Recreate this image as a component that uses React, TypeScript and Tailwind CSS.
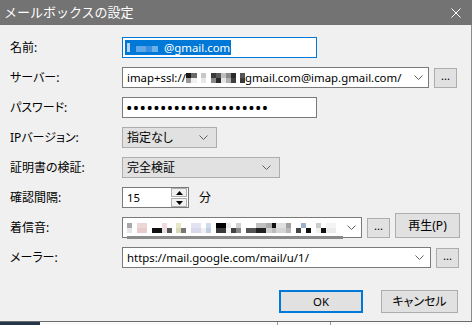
import React from 'react';

const jp = "font-['Noto_Sans','Noto_Sans_CJK_JP',sans-serif] [font-feature-settings:'palt']";
const latin = "font-['Noto_Sans',sans-serif] text-[11.4px]";

type Cell = [number, string, string];

// mosaic blocks (censored parts of the addresses)
const serverBlur: Cell[] = [
    [5, '#1a1a1a', '#9a9a9a'],
    [6, '#6a6a6a', '#f0f0f0'],
    [4, '#ffffff', '#ffffff'],
    [5, '#c8c8c8', '#e8e8e8'],
    [5, '#ffffff', '#ffffff'],
    [5, '#3a3a3a', '#8a8a8a'],
    [5, '#5a5a5a', '#2a2a2a'],
    [5, '#c0c0c0', '#e4e4e4'],
    [5, '#8a8a8a', '#b0b0b0'],
    [5, '#2a2a2a', '#404040'],
    [4, '#ffffff', '#ffffff'],
    [5, '#555555', '#3a3a3a'],
];

const ringBlur: Cell[] = [
    [5, '#a8a8a8', '#e6e6e6'],
    [5, '#ffffff', '#ffffff'],
    [10, '#ecd6d6', '#e8cccc'],
    [5, '#ffffff', '#ffffff'],
    [10, '#ffffff', '#111111'],
    [5, '#f0d8e0', '#e8e0e0'],
    [5, '#ffffff', '#555555'],
    [4, '#ffffff', '#ffffff'],
    [5, '#e8e6c8', '#d8d8b8'],
    [5, '#ffffff', '#777777'],
    [5, '#ffffff', '#ffffff'],
    [10, '#e2e2f2', '#d8d8ec'],
    [5, '#ffffff', '#f0f0f0'],
    [5, '#d0dcea', '#c0d0e0'],
    [5, '#ffffff', '#ffffff'],
    [10, '#000000', '#3a3a3a'],
    [5, '#e8e8e8', '#f4f4f4'],
    [5, '#ffffff', '#444444'],
    [5, '#d0d0d0', '#888888'],
    [5, '#ffffff', '#ffffff'],
    [10, '#ffffff', '#555555'],
    [10, '#c0c0c0', '#222222'],
    [6, '#aaaaaa', '#d0d0d0'],
    [4, '#111111', '#bbbbbb'],
    [10, '#e0e0e0', '#d4d4d4'],
    [5, '#a0a0a0', '#b8b8b8'],
    [5, '#ffffff', '#ffffff'],
    [5, '#ffffff', '#444444'],
    [5, '#9ab0cc', '#ffffff'],
    [5, '#ffffff', '#111111'],
    [5, '#ffffff', '#ffffff'],
    [5, '#cccccc', '#f0f0f0'],
    [5, '#ffffff', '#111111'],
    [10, '#f4f4f4', '#ececec'],
];

function Blur({ cells }: { cells: Cell[] }) {
    return (
        <span className="inline-flex flex-none">
            {cells.map(([w, top, bottom], i) => (
                <span key={i} className="flex flex-col">
                    <span style={{ width: w, height: 5, background: top }} />
                    <span style={{ width: w, height: 5, background: bottom }} />
                </span>
            ))}
        </span>
    );
}

function Chevron() {
    return (
        <svg width="9" height="5" viewBox="0 0 9 5" className="flex-none">
            <polyline points="0.5,0.5 4.5,4.5 8.5,0.5" fill="none" stroke="#606060" strokeWidth="1" />
        </svg>
    );
}

function Label({ text }: { text: string }) {
    return <div className={`w-[122px] flex-none pl-[10px] text-[12px] text-black ${jp}`}>{text}</div>;
}

function DotsButton() {
    return (
        <button className={`ml-[5px] w-[23px] h-[20px] flex-none bg-[#e1e1e1] border border-[#adadad] leading-none text-black flex items-center justify-center pb-[4px] ${latin}`}>
            ...
        </button>
    );
}

export default function App() {
    return (
        <div className="w-[472px] h-[325px] bg-[#f0f0f0] overflow-hidden flex flex-col">
            {/* Title bar */}
            <div className="h-[25px] flex-none bg-[#737373] flex items-center justify-between pl-[4px] pr-[11px]">
                <span className="text-[13px] text-white font-['Noto_Sans','Noto_Sans_CJK_JP',sans-serif]">メールボックスの設定</span>
                <svg width="10" height="10" viewBox="0 0 10 10">
                    <path d="M0.5 0.5 L9.5 9.5 M9.5 0.5 L0.5 9.5" stroke="#ffffff" strokeWidth="1" />
                </svg>
            </div>

            {/* Body */}
            <div className="h-[296px] flex-none flex flex-col pt-[12px] border-r border-[#8c8c8c]">
                <div className="flex flex-col gap-[9px]">
                    {/* 名前 */}
                    <div className="h-[21px] flex items-center">
                        <Label text="名前:" />
                        <div className="w-[195px] h-[21px] bg-white border border-[#0078d7] flex items-center px-[2px]">
                            <span className={`h-[15px] bg-[#0078d7] flex items-center pl-[2px] pr-[1px] text-white ${latin}`}>
                                <span className="inline-flex mr-[2px]">
                                    <span className="w-[3px] h-[9px] bg-[#b8d4f0]" />
                                    <span className="w-[6px] h-[9px] bg-[#0078d7]" />
                                    <span className="w-[10px] h-[6px] mt-[3px] bg-[#5ea6e6]" />
                                    <span className="w-[6px] h-[6px] mt-[3px] bg-[#3a90de]" />
                                    <span className="w-[6px] h-[6px] mt-[3px] bg-[#6ab0ea]" />
                                    <span className="w-[4px] h-[6px] mt-[3px] bg-[#0078d7]" />
                                </span>
                                @gmail.com
                            </span>
                        </div>
                    </div>

                    {/* サーバー */}
                    <div className="h-[21px] flex items-center">
                        <Label text="サーバー:" />
                        <div className={`w-[307px] h-[21px] bg-white border border-[#7a7a7a] flex items-center pl-[4px] pr-[5px] text-black whitespace-nowrap ${latin}`}>
                            <span>imap+ssl://</span>
                            <Blur cells={serverBlur} />
                            <span>gmail.com@imap.gmail.com/</span>
                            <span className="flex-1" />
                            <Chevron />
                        </div>
                        <DotsButton />
                    </div>

                    {/* パスワード */}
                    <div className="h-[21px] flex items-center">
                        <Label text="パスワード:" />
                        <div className="w-[195px] h-[21px] bg-white border border-[#7a7a7a] flex items-center pl-[3px] overflow-hidden">
                            <span className="text-[17px] leading-none text-black font-['Noto_Sans',sans-serif] tracking-[0.4px]">
                                •••••••••••••••••••••
                            </span>
                        </div>
                    </div>

                    {/* IPバージョン */}
                    <div className="h-[21px] flex items-center">
                        <Label text="IPバージョン:" />
                        <div className={`w-[95px] h-[21px] bg-[#e1e1e1] border border-[#adadad] flex items-center justify-between pl-[4px] pr-[8px] text-[12px] text-black ${jp}`}>
                            <span>指定なし</span>
                            <Chevron />
                        </div>
                    </div>

                    {/* 証明書の検証 */}
                    <div className="h-[21px] flex items-center">
                        <Label text="証明書の検証:" />
                        <div className={`w-[158px] h-[21px] bg-[#e1e1e1] border border-[#adadad] flex items-center justify-between pl-[4px] pr-[8px] text-[12px] text-black ${jp}`}>
                            <span>完全検証</span>
                            <Chevron />
                        </div>
                    </div>

                    {/* 確認間隔 */}
                    <div className="h-[21px] flex items-center">
                        <Label text="確認間隔:" />
                        <div className="w-[67px] h-[21px] bg-white border border-[#7a7a7a] flex items-center">
                            <span className={`flex-1 pl-[4px] text-black ${latin}`}>15</span>
                            <div className="w-[16px] h-[19px] flex flex-col gap-[1px] mr-[1px]">
                                <div className="flex-1 bg-[#f0f0f0] border border-[#adadad] flex items-center justify-center">
                                    <svg width="7" height="4" viewBox="0 0 7 4">
                                        <polygon points="0,4 3.5,0 7,4" fill="#000000" />
                                    </svg>
                                </div>
                                <div className="flex-1 bg-[#f0f0f0] border border-[#adadad] flex items-center justify-center">
                                    <svg width="7" height="4" viewBox="0 0 7 4">
                                        <polygon points="0,0 3.5,4 7,0" fill="#000000" />
                                    </svg>
                                </div>
                            </div>
                        </div>
                        <span className={`ml-[10px] text-[12px] text-black ${jp}`}>分</span>
                    </div>

                    {/* 着信音 */}
                    <div className="h-[21px] flex items-end">
                        <div className="h-[21px] flex items-center">
                            <Label text="着信音:" />
                        </div>
                        <div className="relative w-[240px] h-[21px] bg-white border border-[#7a7a7a] flex items-center pl-[4px] pr-[5px]">
                            <Blur cells={ringBlur} />
                            <span className="flex-1" />
                            <Chevron />
                            <span className="absolute left-[4px] bottom-[-2px] w-[216px] h-[3px] bg-[#8a8a8a]" />
                        </div>
                        <div className="h-[21px] flex items-center">
                            <DotsButton />
                        </div>
                        <button className={`ml-[5px] w-[65px] h-[25px] bg-[#e1e1e1] border border-[#adadad] text-[12px] text-black ${jp}`}>
                            再生(P)
                        </button>
                    </div>

                    {/* メーラー */}
                    <div className="h-[21px] flex items-center">
                        <Label text="メーラー:" />
                        <div className={`w-[309px] h-[21px] bg-white border border-[#7a7a7a] flex items-center pl-[4px] pr-[6px] text-black ${latin}`}>
                            <span>https://mail.google.com/mail/u/1/</span>
                            <span className="flex-1" />
                            <Chevron />
                        </div>
                        <DotsButton />
                    </div>
                </div>

                {/* Buttons */}
                <div className="mt-[22px] flex justify-end gap-[18px] pr-[13px]">
                    <button className={`w-[84px] h-[23px] bg-[#e1e1e1] border-2 border-[#0078d7] text-black ${latin}`}>
                        OK
                    </button>
                    <button className={`w-[77px] h-[23px] bg-[#e1e1e1] border border-[#adadad] text-[12px] text-black ${jp}`}>
                        キャンセル
                    </button>
                </div>
            </div>

            {/* Window behind the dialog */}
            <div className="flex-1 flex border-t border-[#6a6a6a]">
                <div className="w-[40px] bg-[#24364c]" />
                <div className="flex-1 bg-[#fafafa] flex">
                    <div className="w-[237px]" />
                    <div className="w-[1px] bg-[#999999]" />
                    <div className="w-[52px]" />
                    <div className="w-[1px] bg-[#999999]" />
                </div>
            </div>
        </div>
    );
}
